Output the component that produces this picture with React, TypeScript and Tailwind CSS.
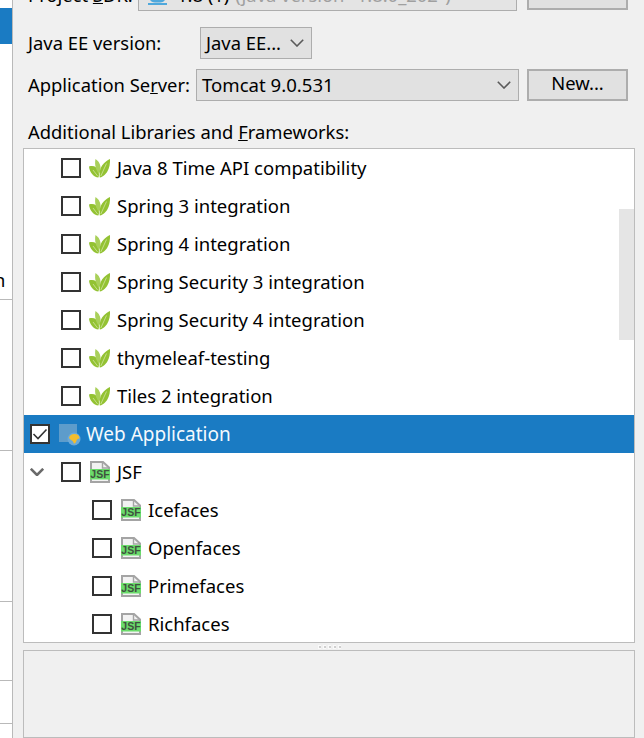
import React from 'react';

const fontStack = 'font-["Noto_Sans","Open_Sans",sans-serif]';

const Chevron = ({ className = '', weight = 1.6, color = '#5a5a5a' }: { className?: string; weight?: number; color?: string }) => (
  <svg viewBox="0 0 14 8" className={className} fill="none" stroke={color} strokeWidth={weight}>
    <path d="M0.8 0.8 L7 7 L13.2 0.8" />
  </svg>
);

const CheckBox = ({ checked = false }: { checked?: boolean }) => (
  <div className="w-5 h-5 shrink-0 bg-white border-2 border-[#333333] flex items-center justify-center">
    {checked && (
      <svg viewBox="0 0 16 16" className="w-4 h-4" fill="none" stroke="#333333" strokeWidth="1.6">
        <path d="M1.5 8 L6 12.5 L14.5 3.5" />
      </svg>
    )}
  </div>
);

const LeafIcon = () => (
  <svg viewBox="0 0 21 19" className="w-[21px] h-[19px] shrink-0 -ml-px">
    <path d="M0 7.5 C4.5 6 8.5 8 9.6 12.5 C10.2 15 10 16.8 9.4 18.5 C4.5 18 0.6 13.5 0 7.5 Z" fill="#93c233" />
    <path d="M6.5 0 C10 2.2 12 6 11.5 10.5 C11.3 12.5 10.6 14 9.8 15 C7.4 11.4 5.2 6.5 6.5 0 Z" fill="#a9d05a" />
    <path d="M21 0 C21.3 6 19.8 12 15.8 15.8 C14.2 17.4 12.6 18.2 10.8 18.5 C9.8 12 12 7 15 4.2 C16.8 2.4 19 1 21 0 Z" fill="#93c233" />
    <path d="M4 11 L8.6 17 M17.5 4.5 L11.8 17" stroke="#e4f0c4" strokeWidth="0.6" fill="none" />
  </svg>
);

const JsfIcon = () => (
  <svg viewBox="0 0 20 22" className="w-5 h-[22px] shrink-0">
    <path d="M1 1 H13 L19 6.5 V21 H1 Z" fill="#f2f2f2" stroke="#a4a4a4" strokeWidth="2" />
    <path d="M12.5 1 V7 H19" fill="none" stroke="#a4a4a4" strokeWidth="1.4" />
    <rect x="0" y="8" width="20" height="10.5" fill="#6bdc6b" />
    <text x="10" y="17" textAnchor="middle" fontSize="10.5" fontWeight="700" fill="#3f523f" fontFamily="Liberation Sans, sans-serif">JSF</text>
  </svg>
);

const WebIcon = () => (
  <svg viewBox="0 0 20 20" className="w-5 h-5 shrink-0 overflow-visible">
    <rect x="0" y="0" width="18" height="18" fill="#5d9ccb" />
    <circle cx="15" cy="15" r="6.5" fill="#69a9da" />
    <path d="M10 14 C10.5 11 13.5 9.5 16 10 C19 10.3 20.8 12.5 20.4 14.5 C18.5 14.5 17.8 15.8 17.2 17.5 C16.5 19.5 15 20.2 14.4 18.8 C14.6 16.5 11.5 16.5 10 14 Z" fill="#f2bd2e" />
  </svg>
);

const Label = ({ children, width }: { children: React.ReactNode; width: string }) => (
  <div className={`${width} shrink-0 whitespace-nowrap`}>{children}</div>
);

type Row = {
  label: string;
  icon: 'leaf' | 'jsf' | 'web';
  indent: string;
  checked?: boolean;
  selected?: boolean;
  expander?: boolean;
};

const rows: Row[] = [
  { label: 'Java 8 Time API compatibility', icon: 'leaf', indent: 'pl-[37px]' },
  { label: 'Spring 3 integration', icon: 'leaf', indent: 'pl-[37px]' },
  { label: 'Spring 4 integration', icon: 'leaf', indent: 'pl-[37px]' },
  { label: 'Spring Security 3 integration', icon: 'leaf', indent: 'pl-[37px]' },
  { label: 'Spring Security 4 integration', icon: 'leaf', indent: 'pl-[37px]' },
  { label: 'thymeleaf-testing', icon: 'leaf', indent: 'pl-[37px]' },
  { label: 'Tiles 2 integration', icon: 'leaf', indent: 'pl-[37px]' },
  { label: 'Web Application', icon: 'web', indent: 'pl-[6px]', checked: true, selected: true },
  { label: 'JSF', icon: 'jsf', indent: 'pl-[6px]', expander: true },
  { label: 'Icefaces', icon: 'jsf', indent: 'pl-[68px]' },
  { label: 'Openfaces', icon: 'jsf', indent: 'pl-[68px]' },
  { label: 'Primefaces', icon: 'jsf', indent: 'pl-[68px]' },
  { label: 'Richfaces', icon: 'jsf', indent: 'pl-[68px]' },
];

const LibraryRow = ({ row }: { row: Row }) => (
  <div className={`h-[38px] flex items-center text-[18.5px] ${row.indent} ${row.selected ? 'bg-[#1a7bc3] text-[#f4f9fd]' : 'text-black'}`}>
    {row.expander && (
      <div className="w-[31px] shrink-0 flex items-center">
        <Chevron className="w-[14px] h-2" weight={2.6} color="#6a6a6a" />
      </div>
    )}
    <CheckBox checked={row.checked} />
    <div className="ml-[9px] mr-[7px] w-5 shrink-0 flex items-center justify-center">
      {row.icon === 'leaf' && <LeafIcon />}
      {row.icon === 'jsf' && <JsfIcon />}
      {row.icon === 'web' && <WebIcon />}
    </div>
    <span className={`whitespace-nowrap ${row.selected ? 'text-[19px]' : ''}`}>{row.label}</span>
  </div>
);

export default function App() {
  return (
    <div className={`${fontStack} w-[644px] h-[738px] overflow-hidden flex bg-[#f0f0f0] text-[18.4px] leading-none text-black`}>
      {/* Left sidebar, cut off by the crop */}
      <div className="w-[13px] shrink-0 h-full bg-white border-r border-[#b9b9b9] flex flex-col">
        <div className="h-[300px] border-b border-[#b9b9b9] pt-2 overflow-hidden">
          <div className="h-9 bg-[#1a7bc3]" />
          <div className="h-[245px] flex items-end overflow-hidden">
            <span className="whitespace-nowrap -ml-[6px]">n</span>
          </div>
        </div>
        <div className="h-[151px] border-b border-[#b9b9b9]" />
        <div className="h-[151px] border-b border-[#b9b9b9]" />
        <div className="h-[79px] border-b border-[#b9b9b9]" />
        <div className="h-[43px] border-b border-[#b9b9b9]" />
      </div>

      {/* Main form */}
      <div className="flex-1 min-w-0 flex flex-col -mt-[21px] pl-[10px] pr-[9px]">
        <div className="h-8 flex items-center pl-[5px] mb-4">
          <Label width="w-[110px]">Project <span className="underline">S</span>DK:</Label>
          <div className="w-[379px] h-8 bg-[#e4e4e4] border border-[#adadad] flex items-center pl-[5px] whitespace-nowrap overflow-hidden">
            <svg viewBox="0 0 24 20" className="w-6 h-5 shrink-0 mr-[9px]">
              <path d="M1 2 H5 V6 H1 Z" fill="#b9b9b9" />
              <path d="M6 6 H21 V14 C21 16 19 17.5 16 17.5 H11 C8 17.5 6 16 6 14 Z" fill="#4fa8dc" />
              <path d="M4 18 H23 V20 H4 Z" fill="#4fa8dc" />
            </svg>
            <span>1.8 (1)</span>
            <span className="ml-[6px] text-[#a0a0a0]">(java version "1.8.0_202")</span>
          </div>
          <div className="ml-[10px] w-[101px] h-[31px] self-start bg-[#e1e1e1] border-2 border-[#adadad]" />
        </div>

        <div className="h-8 flex items-center pl-[5px] mb-[10px]">
          <Label width="w-[172px]">Java EE version:</Label>
          <div className="w-[112px] h-8 bg-[#e1e1e1] border border-[#adadad] flex items-center justify-between pl-[5px] pr-[7px]">
            <span className="whitespace-nowrap">Java EE...</span>
            <Chevron className="w-[14px] h-2 shrink-0" />
          </div>
        </div>

        <div className="h-8 flex items-center pl-[5px]">
          <Label width="w-[168px]">Application Se<span className="underline">r</span>ver:</Label>
          <div className="w-[323px] h-8 bg-[#e1e1e1] border border-[#adadad] flex items-center justify-between pl-[5px] pr-[7px]">
            <span className="whitespace-nowrap text-[18.6px]">Tomcat 9.0.531</span>
            <Chevron className="w-[14px] h-2 shrink-0" />
          </div>
          <div className="ml-2 w-[101px] h-8 bg-[#e1e1e1] border-2 border-[#adadad] flex items-center justify-center pb-[3px]">
            New...
          </div>
        </div>

        <div className="h-[47px] flex items-end pl-[5px] pb-[7px] whitespace-nowrap">
          <div>Additional Libraries and <span className="underline">F</span>rameworks:</div>
        </div>

        <div className="relative h-[495px] shrink-0 bg-white border border-[#bcbcbc] overflow-hidden">
          {rows.map(row => (
            <LibraryRow key={row.label} row={row} />
          ))}
          <div className="absolute right-0 top-[60px] w-[15px] h-[131px] bg-[#e5e5e5]" />
        </div>

        {/* Splitter grip */}
        <div className="h-[7px] shrink-0 flex items-center justify-center pl-[2px]">
          <svg viewBox="0 0 24 4" className="w-6 h-1">
            {[0, 5, 10, 15, 20].map(x => (
              <g key={x}>
                <rect x={x} y="0" width="3" height="4" fill="#fafafa" />
                <rect x={x + 1} y="1" width="2" height="2" fill="#cfcfcf" />
              </g>
            ))}
          </svg>
        </div>

        <div className="flex-1 bg-[#f0f0f0] border border-[#bcbcbc]" />
      </div>
    </div>
  );
}
